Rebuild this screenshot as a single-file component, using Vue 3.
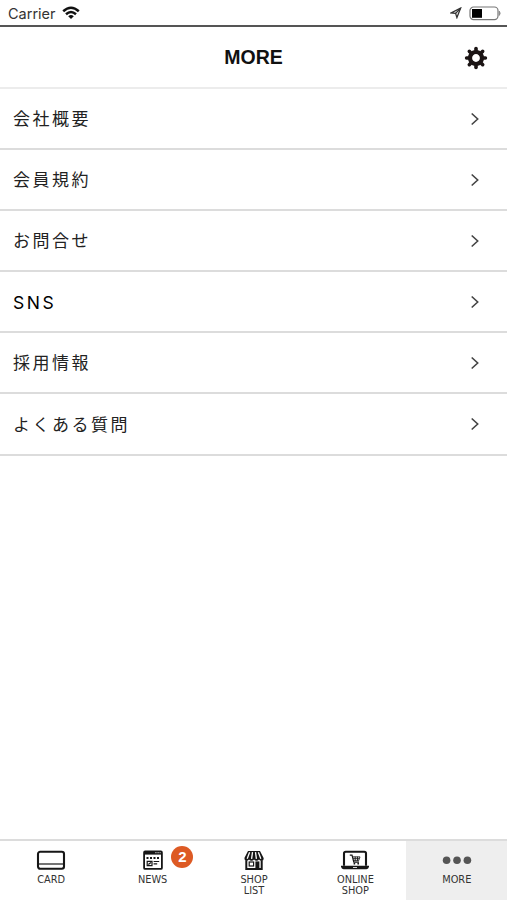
<script setup>
const items = ['会社概要', '会員規約', 'お問合せ', 'SNS', '採用情報', 'よくある質問']
const tabs = [
  { id: 'card', lines: ['CARD'] },
  { id: 'news', lines: ['NEWS'], badge: 2 },
  { id: 'shop', lines: ['SHOP', 'LIST'] },
  { id: 'online', lines: ['ONLINE', 'SHOP'] },
  { id: 'more', lines: ['MORE'], active: true }
]
const teeth = [0, 45, 90, 135, 180, 225, 270, 315]
</script>

<template>
  <div class="screen">
    <div class="status">
      <span class="carrier">Carrier</span>
      <svg class="wifi" width="18" height="14" viewBox="0 0 18 14" fill="none" stroke="#111" stroke-width="2.5">
        <path d="M1.2 5.2Q9-1.7 16.8 5.2" />
        <path d="M4 8.2Q9 3.8 14 8.2" />
        <path d="M9 13L6.2 10.2Q9 8 11.8 10.2Z" fill="#111" stroke="none" />
      </svg>
      <svg class="location" width="12" height="12" viewBox="0 0 12 12" fill="none" stroke="#333" stroke-width="1.3">
        <path d="M10.6 1.2L1 6L5.6 6.4L6.9 10.6Z" />
        <path d="M10.6 1.2L5.6 6.4" />
      </svg>
      <svg class="battery" width="33" height="15" viewBox="0 0 33 15">
        <rect x="1" y="1" width="28" height="12.6" rx="3.6" fill="#fff" stroke="#777" stroke-width="1.2" />
        <rect x="3" y="3" width="10" height="8.8" fill="#000" />
        <path d="M30.3 5.2Q32 7.2 30.3 9.4Z" fill="#888" stroke="#888" />
      </svg>
    </div>

    <header class="header">
      <h1>MORE</h1>
      <svg class="gear" width="24" height="24" viewBox="-12 -12 24 24">
        <circle r="6" fill="none" stroke="#1b1414" stroke-width="4.2" />
        <path v-for="a in teeth" :key="a" :transform="`rotate(${a})`" d="M-1.8-6.5V-9.5Q-1.8-11.2 0-11.2T1.8-9.5V-6.5Z" fill="#1b1414" />
      </svg>
    </header>

    <ul class="list">
      <li v-for="item in items" :key="item">
        <span>{{ item }}</span>
        <svg width="10" height="14" viewBox="0 0 10 14" fill="none" stroke="#444" stroke-width="1.6">
          <path d="M1.7 1.5L7.7 7L1.7 12.5" />
        </svg>
      </li>
    </ul>

    <nav class="tabs">
      <div v-for="tab in tabs" :key="tab.id" class="tab" :class="{ active: tab.active }">
        <div class="icon">
          <svg v-if="tab.id === 'card'" width="30" height="22" viewBox="0 0 30 22" fill="none" stroke="#161616">
            <rect x="2" y="1.8" width="26" height="17" rx="2.2" stroke-width="2.1" />
            <path d="M3 14H27" stroke-width="1.2" />
          </svg>
          <svg v-else-if="tab.id === 'news'" width="22" height="22" viewBox="0 0 22 22" fill="none" stroke="#161616">
            <rect x="2.1" y="1.5" width="17.8" height="17.4" rx="1" stroke-width="1.8" />
            <path d="M2 2.8H20" stroke-width="3.6" />
            <path d="M13.3 2.7H14.5M15.5 2.7H16.7M17.6 2.7H18.6" stroke="#fff" stroke-width=".9" />
            <path d="M4.5 7.9H17.6" stroke-width="2" stroke-dasharray="2 1.5" />
            <path d="M5.2 11.3H10V15.6H5.2ZM6.3 14.5L9 12.5M11.6 11.5H17.2M11.6 13.9H15.2" stroke-width="1.2" />
          </svg>
          <svg v-else-if="tab.id === 'shop'" width="22" height="22" viewBox="0 0 22 22" fill="none" stroke="#161616">
            <path d="M5 1H17L20.6 8Q21 10.8 18.8 10.8T16 9.5Q15 10.8 13.5 10.8T11 9.5Q10 10.8 8.5 10.8T6 9.5Q5 10.8 3.2 10.8T1.4 8Z" fill="#161616" stroke="none" />
            <path d="M6.6 2.2L4.2 8.8M9.5 2.2L8.6 8.8M12.5 2.2L13.4 8.8M15.4 2.2L17.8 8.8" stroke="#fff" stroke-width="1.3" />
            <path d="M3.3 10.2V19H18.7V10.2" stroke-width="2" />
            <rect x="6.2" y="12" width="4.4" height="4" stroke-width="1.2" />
            <path d="M12.4 11.4H16.4V19.2H12.4Z" fill="#161616" stroke="none" />
          </svg>
          <svg v-else-if="tab.id === 'online'" width="30" height="22" viewBox="0 0 30 22" fill="none" stroke="#161616">
            <path d="M4 15.7V3.5Q4 1.8 5.7 1.8H24.3Q26 1.8 26 3.5V15.7" stroke-width="2.1" />
            <path d="M1 15.8H29V16.8Q28.5 19.2 26.5 19.2H3.5Q1.5 19.2 1 16.8Z" fill="#161616" stroke="none" />
            <path d="M13 17.5H17" stroke="#fff" stroke-width=".8" />
            <path d="M9.8 5.2H12L13.8 12.2H19" stroke-width="1.2" />
            <path d="M12.5 6.9H20L18.6 10.7H13.5M15.2 6.7V10.7M17.5 6.7V10.7M13 8.7H19" stroke-width=".9" />
            <circle cx="14.4" cy="13.7" r=".9" fill="#161616" stroke="none" />
            <circle cx="18.2" cy="13.7" r=".9" fill="#161616" stroke="none" />
          </svg>
          <svg v-else width="30" height="22" viewBox="0 0 30 22" fill="#555">
            <circle cx="4.6" cy="10.2" r="3.8" />
            <circle cx="15" cy="10.2" r="3.8" />
            <circle cx="25.4" cy="10.2" r="3.8" />
          </svg>
        </div>
        <div class="label"><div v-for="line in tab.lines" :key="line">{{ line }}</div></div>
        <span v-if="tab.badge" class="badge">{{ tab.badge }}</span>
      </div>
    </nav>
  </div>
</template>

<style>
body { margin: 0; background: #fff; }
</style>

<style scoped>
.screen {
  display: flex;
  flex-direction: column;
  height: 900px;
  overflow: hidden;
  background: #fff;
  color: #222;
  font-family: "Liberation Sans", "Noto Sans CJK JP", sans-serif;
}
.status {
  box-sizing: border-box;
  height: 27px;
  display: flex;
  align-items: center;
  padding: 1px 5px 0 8px;
  border-bottom: 2px solid #555;
}
.carrier {
  font: 14.5px/24px Inter, sans-serif;
  color: #333;
  width: 54px;
  padding-top: 1px;
  white-space: nowrap;
}
.location { margin-left: auto; margin-right: 7px; }
.battery { display: block; }
.header {
  box-sizing: border-box;
  height: 62px;
  display: grid;
  grid-template-columns: 44px 1fr 44px;
  align-items: center;
  border-bottom: 2px solid #ececec;
}
h1 {
  grid-column: 2;
  margin: 0;
  text-align: center;
  font-size: 19.5px;
  line-height: 26px;
  color: #111;
}
.gear { margin: 1px 0 0 1px; }
.list { margin: 0; padding: 0; list-style: none; }
.list li {
  box-sizing: border-box;
  height: 61.1px;
  display: flex;
  align-items: center;
  justify-content: space-between;
  padding: 0 27px 0 13px;
  border-bottom: 2px solid #dcdcdc;
  font-size: 17px;
  line-height: 26px;
  letter-spacing: 2.5px;
}
.list span { padding-top: 3px; }
.list li:nth-child(4) span {
  padding-top: 2px;
  color: #000;
  font-family: Inter, sans-serif;
  font-size: 17.5px;
  letter-spacing: 2.5px;
}
.tabs {
  box-sizing: border-box;
  height: 61px;
  margin-top: auto;
  display: grid;
  grid-template-columns: repeat(5, 1fr);
  border-top: 2px solid #dcdcdc;
}
.tab {
  position: relative;
  display: flex;
  flex-direction: column;
  align-items: center;
  padding: 9px 0 0 1px;
}
.active { background: #eee; }
.icon { height: 22px; }
.icon svg { display: block; }
.label {
  margin-top: 2px;
  font: 9.8px/11.4px "DejaVu Sans", sans-serif;
  text-align: center;
  color: #333;
}
.badge {
  position: absolute;
  left: 70px;
  top: 5px;
  width: 22px;
  height: 22px;
  border-radius: 50%;
  background: #dd5a24;
  color: #fff;
  font: bold 15px/22px "Liberation Sans", sans-serif;
  text-align: center;
}
</style>
